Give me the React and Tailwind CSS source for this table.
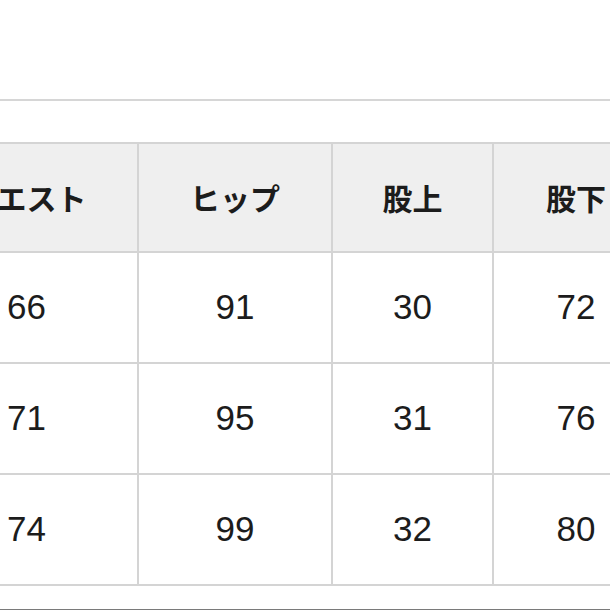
import React from "react";

const headers = ["ウエスト", "ヒップ", "股上", "股下"];
const rows = [
  ["66", "91", "30", "72"],
  ["71", "95", "31", "76"],
  ["74", "99", "32", "80"],
];

export default function App() {
  return (
    <div className="w-[610px] h-[610px] overflow-hidden bg-white flex flex-col text-[#1c1c1c]">
      <div className="h-[99px] shrink-0" />
      <div className="h-[2px] bg-[#d6d6d6] shrink-0" />
      <div className="mt-[41px] ml-[-86px] shrink-0">
        <div className="grid grid-cols-[223px_194px_161px_166px] w-[746px] border-t-2 border-l-2 border-[#d4d4d4]">
          {headers.map((h) => (
            <div
              key={h}
              className="h-[109px] bg-[#efefef] border-r-2 border-b-2 border-[#d4d4d4] flex items-center justify-center text-[30px] font-semibold font-['Noto_Sans_CJK_JP',sans-serif]"
            >
              {h}
            </div>
          ))}
          {rows.map((r, i) =>
            r.map((v, j) => (
              <div
                key={i + "-" + j}
                className="h-[111px] border-r-2 border-b-2 border-[#d4d4d4] flex items-center justify-center text-[35px] font-['Liberation_Sans',Arial,sans-serif]"
              >
                {v}
              </div>
            ))
          )}
        </div>
      </div>
      <div className="mt-auto h-px bg-[#7a7a7a] shrink-0" />
    </div>
  );
}
